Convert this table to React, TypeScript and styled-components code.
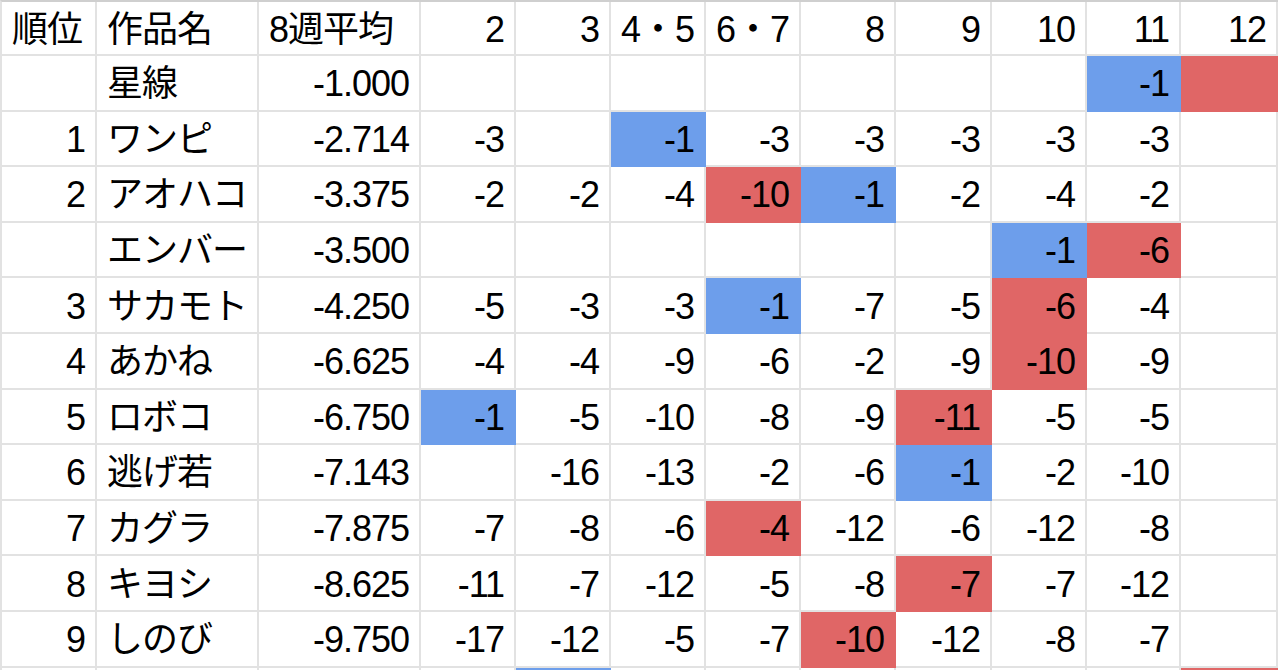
import React from 'react';
import styled, { createGlobalStyle } from 'styled-components';

const GlobalStyle = createGlobalStyle`
  html, body {
    margin: 0;
    padding: 0;
    background: #ffffff;
    overflow: hidden;
  }
  body {
    font-family: "Liberation Sans", "Noto Sans CJK JP", sans-serif;
  }
`;

type Fill = 'blue' | 'red' | undefined;

const fills: Record<string, string> = {
  blue: '#6d9eeb',
  red: '#e06666',
};

// column widths measured from the gridlines of the sheet
const COLUMNS = '95px 162px 162px 95px 95px 95px 95px 95px 96px 95px 94px 97px';

const Page = styled.div`
  width: 1280px;
  height: 670px;
  overflow: hidden;
  background: #ffffff;
`;

const Sheet = styled.div`
  display: flex;
  flex-direction: column;
  border-top: 2px solid #cfcfcf;
  border-left: 2px solid #e2e2e2;
  width: max-content;
`;

const Row = styled.div<{ $header?: boolean }>`
  display: grid;
  grid-template-columns: ${COLUMNS};
  height: ${(p) => (p.$header ? '54px' : '55.6px')};
`;

const Cell = styled.div<{ $align?: 'left' | 'right'; $fill?: Fill }>`
  box-sizing: border-box;
  display: flex;
  align-items: center;
  justify-content: ${(p) => (p.$align === 'left' ? 'flex-start' : 'flex-end')};
  padding: 3px 10px 0 10px;
  border-right: 2px solid ${(p) => (p.$fill ? fills[p.$fill] : '#e2e2e2')};
  border-bottom: 2px solid ${(p) => (p.$fill ? fills[p.$fill] : '#e2e2e2')};
  background: ${(p) => (p.$fill ? fills[p.$fill] : '#ffffff')};
  color: #000000;
  font-size: 36px;
  letter-spacing: -1px;
  line-height: 1;
  white-space: nowrap;
  overflow: hidden;
`;

type Week = { v: string; fill?: Fill };

type Entry = {
  rank: string;
  title: string;
  avg: string;
  weeks: Week[];
};

const w = (v: string, fill?: Fill): Week => ({ v, fill });

const headers = ['2', '3', '4・5', '6・7', '8', '9', '10', '11', '12'];

const entries: Entry[] = [
  {
    rank: '', title: '星線', avg: '-1.000',
    weeks: [w(''), w(''), w(''), w(''), w(''), w(''), w(''), w('-1', 'blue'), w('', 'red')],
  },
  {
    rank: '1', title: 'ワンピ', avg: '-2.714',
    weeks: [w('-3'), w(''), w('-1', 'blue'), w('-3'), w('-3'), w('-3'), w('-3'), w('-3'), w('')],
  },
  {
    rank: '2', title: 'アオハコ', avg: '-3.375',
    weeks: [w('-2'), w('-2'), w('-4'), w('-10', 'red'), w('-1', 'blue'), w('-2'), w('-4'), w('-2'), w('')],
  },
  {
    rank: '', title: 'エンバー', avg: '-3.500',
    weeks: [w(''), w(''), w(''), w(''), w(''), w(''), w('-1', 'blue'), w('-6', 'red'), w('')],
  },
  {
    rank: '3', title: 'サカモト', avg: '-4.250',
    weeks: [w('-5'), w('-3'), w('-3'), w('-1', 'blue'), w('-7'), w('-5'), w('-6', 'red'), w('-4'), w('')],
  },
  {
    rank: '4', title: 'あかね', avg: '-6.625',
    weeks: [w('-4'), w('-4'), w('-9'), w('-6'), w('-2'), w('-9'), w('-10', 'red'), w('-9'), w('')],
  },
  {
    rank: '5', title: 'ロボコ', avg: '-6.750',
    weeks: [w('-1', 'blue'), w('-5'), w('-10'), w('-8'), w('-9'), w('-11', 'red'), w('-5'), w('-5'), w('')],
  },
  {
    rank: '6', title: '逃げ若', avg: '-7.143',
    weeks: [w(''), w('-16'), w('-13'), w('-2'), w('-6'), w('-1', 'blue'), w('-2'), w('-10'), w('')],
  },
  {
    rank: '7', title: 'カグラ', avg: '-7.875',
    weeks: [w('-7'), w('-8'), w('-6'), w('-4', 'red'), w('-12'), w('-6'), w('-12'), w('-8'), w('')],
  },
  {
    rank: '8', title: 'キヨシ', avg: '-8.625',
    weeks: [w('-11'), w('-7'), w('-12'), w('-5'), w('-8'), w('-7', 'red'), w('-7'), w('-12'), w('')],
  },
  {
    rank: '9', title: 'しのび', avg: '-9.750',
    weeks: [w('-17'), w('-12'), w('-5'), w('-7'), w('-10', 'red'), w('-12'), w('-8'), w('-7'), w('')],
  },
  {
    // next row, only its top edge shows in the window
    rank: '', title: '', avg: '',
    weeks: [w(''), w('', 'blue'), w(''), w(''), w(''), w(''), w(''), w(''), w('', 'red')],
  },
];

const App: React.FC = () => {
  return (
    <Page>
      <GlobalStyle />
      <Sheet>
        <Row $header>
          <Cell $align="left">順位</Cell>
          <Cell $align="left">作品名</Cell>
          <Cell $align="left">8週平均</Cell>
          {headers.map((h) => (
            <Cell key={h}>{h}</Cell>
          ))}
        </Row>
        {entries.map((e, i) => (
          <Row key={i}>
            <Cell>{e.rank}</Cell>
            <Cell $align="left">{e.title}</Cell>
            <Cell>{e.avg}</Cell>
            {e.weeks.map((wk, j) => (
              <Cell key={j} $fill={wk.fill}>
                {wk.v}
              </Cell>
            ))}
          </Row>
        ))}
      </Sheet>
    </Page>
  );
};

export default App;
